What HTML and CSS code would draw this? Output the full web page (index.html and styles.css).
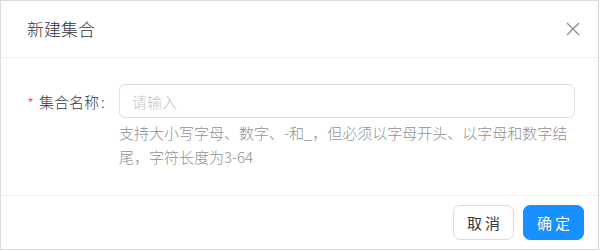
FILE: index.html
```html
<!DOCTYPE html>
<html lang="zh-CN">
<head>
<meta charset="utf-8">
<title>新建集合</title>
<link rel="stylesheet" href="styles.css">
</head>
<body>
<div class="modal">
  <div class="modal-header">
    <div class="modal-title">新建集合</div>
    <button class="modal-close" aria-label="关闭">
      <svg width="14" height="14" viewBox="0 0 14 14"><path d="M1 1L13 13M13 1L1 13" stroke="#8c8c8c" stroke-width="1.3" fill="none"/></svg>
    </button>
  </div>
  <div class="modal-body">
    <div class="form-row">
      <label class="form-label"><span class="required">*</span>集合名称<span class="colon">:</span></label>
      <div class="form-control">
        <input class="text-input" type="text" placeholder="请输入">
        <div class="form-help">支持大小写字母、数字、-和_，但必须以字母开头、以字母和数字结尾，字符长度为3-64</div>
      </div>
    </div>
  </div>
  <div class="modal-footer">
    <button class="btn btn-default">取消</button>
    <button class="btn btn-primary">确定</button>
  </div>
</div>
</body>
</html>
```

FILE: styles.css
```css
* { box-sizing: border-box; }
html, body {
  margin: 0;
  padding: 0;
  background: #ffffff;
}
body {
  font-family: "Noto Sans CJK SC", "Noto Sans", sans-serif;
  font-weight: 300;
  width: 600px;
  height: 251px;
  overflow: hidden;
}
.modal {
  width: 599px;
  height: 250px;
  border: 1px solid #dcdcdc;
  border-right-color: #d4d4d4;
  background: #fff;
  display: flex;
  flex-direction: column;
}
.modal-header {
  height: 57px;
  border-bottom: 1px solid #f0f0f0;
  display: flex;
  align-items: center;
  justify-content: space-between;
  padding: 0 18px 0 26px;
}
.modal-title {
  font-size: 17px;
  line-height: 24px;
  color: #33363d;
  margin-top: -1px;
}
.modal-close {
  border: 0;
  background: transparent;
  padding: 0;
  width: 14px;
  height: 14px;
  display: flex;
  margin-top: -1px;
}
.modal-body {
  flex: 1;
  padding: 26px 23px 0 26px;
}
.form-row {
  display: flex;
  align-items: flex-start;
}
.form-label {
  width: 92px;
  flex: none;
  height: 34px;
  display: flex;
  align-items: center;
  font-size: 15px;
  color: #33363d;
  white-space: nowrap;
}
.required {
  color: #ff4d4f;
  font-size: 16px;
  margin-right: 5px;
  margin-top: 4px;
}
.colon {
  margin-left: 2px;
}
.form-control {
  flex: 1;
}
.text-input {
  display: block;
  width: 100%;
  height: 34px;
  border: 1px solid #dcdfe6;
  border-radius: 6px;
  padding: 0 12px;
  font-family: inherit;
  font-weight: 300;
  font-size: 15px;
  color: #333;
  outline: none;
}
.text-input::placeholder {
  color: #bfc2c8;
}
.form-help {
  margin-top: 3px;
  font-size: 15px;
  line-height: 24px;
  color: #8f9197;
}
.modal-footer {
  height: 54px;
  border-top: 1px solid #f0f0f0;
  display: flex;
  justify-content: flex-end;
  align-items: center;
  gap: 9px;
  padding: 0 14px 0 0;
}
.btn {
  width: 61px;
  height: 35px;
  border-radius: 7px;
  font-family: inherit;
  font-weight: 400;
  font-size: 15px;
  letter-spacing: 3px;
  text-indent: 3px;
  padding: 0;
  display: flex;
  align-items: center;
  justify-content: center;
}
.btn-default {
  background: #fff;
  border: 1px solid #dcdcdc;
  color: #33363d;
}
.btn-primary {
  background: #1890ff;
  border: 1px solid #1890ff;
  color: #fff;
}
```
